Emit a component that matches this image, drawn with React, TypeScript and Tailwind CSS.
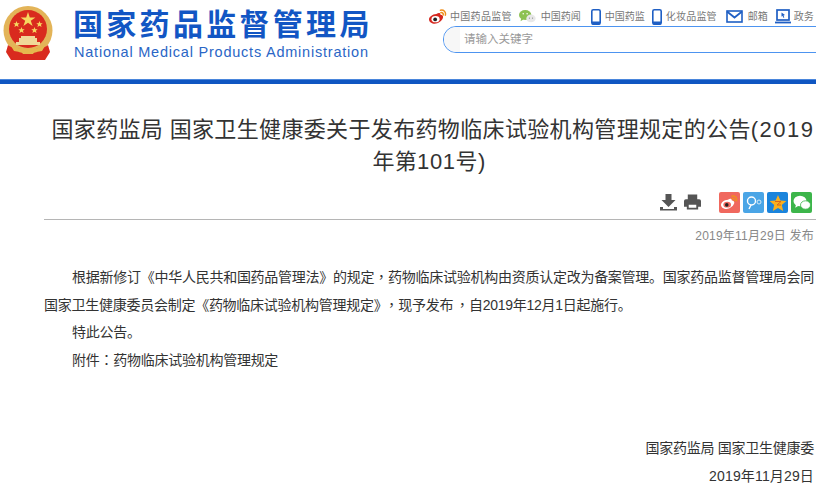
import { FC } from 'react';

const cjk = "font-['Liberation_Sans','Noto_Sans_CJK_SC',sans-serif]";

const Emblem: FC = () => (
    <svg width="50" height="54" viewBox="0 0 50 54" className="shrink-0">
        <circle cx="25" cy="24.500" r="24.500" fill="#e3b458" />
        <circle cx="25" cy="23" r="19" fill="#d92a1e" />
        <path d="M25 6l1.800 5.400h5.600l-4.600 3.300 1.800 5.400-4.600-3.300-4.600 3.300 1.800-5.400-4.600-3.300h5.600z" fill="#f6d860" />
        <path d="M13.500 15l.9 2.200h2.300l-1.800 1.500.7 2.300-2.100-1.300-2.100 1.300.7-2.300-1.800-1.500h2.300z" fill="#f6d860" />
        <path d="M36.500 15l.9 2.200h2.300l-1.800 1.500.7 2.300-2.100-1.300-2.100 1.300.7-2.300-1.800-1.500h2.300z" fill="#f6d860" />
        <path d="M18.500 21l.9 2.200h2.300l-1.800 1.500.7 2.300-2.100-1.300-2.100 1.300.7-2.300-1.800-1.500h2.300z" fill="#f6d860" />
        <path d="M31.500 21l.9 2.200h2.300l-1.800 1.500.7 2.300-2.100-1.300-2.100 1.300.7-2.300-1.800-1.500h2.300z" fill="#f6d860" />
        <path d="M16 36v-4h2v-2h14v2h2v4h3v3H13v-3z" fill="#f0d898" />
        <path d="M5 39c6 6 34 6 40 0l2 7-5 8H8l-5-8z" fill="#d92a1e" />
        <path d="M8 40c8 4 26 4 34 0l-3 5c-4 1-8 1-9 3h-10c-1-2-5-2-9-3z" fill="#e5b84e" />
    </svg>
);

const PhoneIcon: FC = () => (
    <svg width="10" height="16" viewBox="0 0 10 16">
        <rect x=".8" y=".8" width="8.400" height="14.400" rx="1.500" fill="none" stroke="#1f5fc4" strokeWidth="1.600" />
        <rect x="1" y="12.500" width="8" height="3" fill="#1f5fc4" />
    </svg>
);

const WeiboIcon: FC<{ size?: number; color?: string; eye?: string }> = ({
    size = 18,
    color = '#d5271f',
    eye = '#fff',
}) => (
    <svg width={size} height={size * 0.85} viewBox="0 0 22 18.700">
        <path d="M9 6c3-2 5-1.500 5 1 2 0 4 1.500 3 4-1.500 4-6 7-10 7-3.500 0-7-2-7-5.500 0-2.500 4-6.500 9-6.500z" fill={color} />
        <ellipse cx="8" cy="12.500" rx="5" ry="3.800" fill={eye} />
        <circle cx="7.500" cy="12.800" r="2.300" fill="#222" />
        <path d="M14 1.500c4-1 7 2 6 6M14.500 4.500c2-.5 3.200 1 2.900 2.800" stroke="#f0901e" strokeWidth="1.800" fill="none" strokeLinecap="round" />
    </svg>
);

const WechatIcon: FC = () => (
    <svg width="17" height="15" viewBox="0 0 22 18">
        <ellipse cx="8" cy="7" rx="8" ry="6.500" fill="#8cc152" />
        <path d="M3 11l-1 4 4-2.500z" fill="#8cc152" />
        <circle cx="5.500" cy="5.500" r="1" fill="#fff" />
        <circle cx="10.500" cy="5.500" r="1" fill="#fff" />
        <ellipse cx="15.500" cy="11.500" rx="6" ry="5" fill="#e8e8e8" />
        <circle cx="13.500" cy="11" r=".8" fill="#888" />
        <circle cx="17.500" cy="11" r=".8" fill="#888" />
    </svg>
);

const MailIcon: FC = () => (
    <svg width="17" height="13" viewBox="0 0 17 13">
        <rect x="1" y="1" width="15" height="11" fill="none" stroke="#1f5fc4" strokeWidth="1.600" />
        <path d="M1 1.500l7.500 6 7.500-6" fill="none" stroke="#1f5fc4" strokeWidth="1.800" />
    </svg>
);

const ScreenIcon: FC = () => (
    <svg width="16" height="15" viewBox="0 0 16 15">
        <rect x="2" y="1" width="12" height="10" fill="none" stroke="#1f5fc4" strokeWidth="1.700" />
        <path d="M0 13.500h16" stroke="#1f5fc4" strokeWidth="1.800" />
        <path d="M6.500 3.500l3.500 2.500-1.500.5.800 2-1 .3-.8-2-1 .9z" fill="#1f5fc4" />
    </svg>
);

const topLinks = [
    { icon: <WeiboIcon />, label: '中国药品监管', cls: 'ml-[3px] tracking-[.3px]', item: '' },
    { icon: <WechatIcon />, label: '中国药闻', cls: 'ml-[5px]', item: 'ml-[7px]' },
    { icon: <PhoneIcon />, label: '中国药监', cls: 'ml-[4px]', item: 'ml-[10px]' },
    { icon: <PhoneIcon />, label: '化妆品监管', cls: 'ml-[4px] tracking-[.2px]', item: 'ml-[7px]' },
    { icon: <MailIcon />, label: '邮箱', cls: 'ml-[5px]', item: 'ml-[9px]' },
    { icon: <ScreenIcon />, label: '政务', cls: 'ml-[3px]', item: 'ml-[7px]' },
];

const ShareButton: FC<{ bg: string; children: React.ReactNode }> = ({ bg, children }) => (
    <div className={`w-[21px] h-[21px] rounded-[2px] flex items-center justify-center ${bg}`}>
        {children}
    </div>
);

// 逗号、冒号在原图里居中于字格，这里用繁体字形
const Mid: FC<{ className?: string; children: React.ReactNode }> = ({ className = '', children }) => (
    <span className={`font-['Noto_Sans_CJK_TC'] leading-none ${className}`}>{children}</span>
);

export default function App() {
    return (
        <div className={`w-[816px] h-[485px] overflow-hidden bg-white ${cjk}`}>
            <header className="h-[79px] flex pl-[3px] overflow-hidden">
                <div className="pt-[6px]">
                    <Emblem />
                </div>
                <div className="ml-[20px] w-[300px] shrink-0 pt-[7px]">
                    <div className="text-[30px] leading-[36px] font-bold text-[#1256c4] tracking-[3.300px] whitespace-nowrap">
                        国家药品监督管理局
                    </div>
                    <div className="text-[14.500px] leading-[16px] mt-[1px] ml-[1px] text-[#2a66c6] tracking-[.78px] whitespace-nowrap">
                        National Medical Products Administration
                    </div>
                </div>
                <div className="ml-[56px] shrink-0 w-[400px] pt-[8px]">
                    <div className="flex items-center h-[17px] whitespace-nowrap text-[10px] text-[#777]">
                        {topLinks.map((link) => (
                            <div key={link.label} className={`flex items-center ${link.item}`}>
                                {link.icon}
                                <span className={link.cls}>{link.label}</span>
                            </div>
                        ))}
                    </div>
                    <div className="ml-[14px] mt-[1px] w-[400px] h-[27px] border border-[#4d94f0] rounded-l-[13px] flex items-center">
                        <div className="w-[16px] h-full rounded-l-[13px] bg-[#f7f7f7]" />
                        <span className="ml-[4px] text-[11.500px] text-[#999]">请输入关键字</span>
                    </div>
                </div>
            </header>
            <div className="h-[5px] bg-[#0f56c2] border-t border-[#4a86dc]" />
            <main className="ml-[44px] w-[778px]">
                <h1 className="mt-[30px] text-center text-[22px] leading-[32px] tracking-[.35px] text-[#333] font-normal">
                    国家药监局 国家卫生健康委关于发布药物临床试验机构管理规定的公告
                    <span className="tracking-[1.500px]">(2019</span>
                    <br />
                    年第<span className="tracking-[.6px]">101</span><span className="mr-[8px]">号)</span>
                </h1>
                <div className="mt-[6px] h-[36px] pt-[8px] border-b border-[#b5b5b5] flex items-start pl-[616px]">
                    <svg width="17" height="18" viewBox="0 0 17 18" className="mt-[1px]">
                        <path d="M5.500 1h6v6h4l-7 7-7-7h4zM0 14h3v2h11v-2h3v3.500H0z" fill="#555" />
                    </svg>
                    <svg width="17" height="18" viewBox="0 0 18 18" className="mt-[1px] ml-[7px]">
                        <path d="M4 1h10v5H4zM2 6h14a2 2 0 0 1 2 2v6h-3v3H3v-3H0V8a2 2 0 0 1 2-2zm3 6v3h8v-3z" fill="#555" />
                    </svg>
                    <div className="flex gap-[3px] ml-[18px]">
                        <ShareButton bg="bg-[#f0685e]">
                            <WeiboIcon size={17} color="#fff" eye="#f0685e" />
                        </ShareButton>
                        <ShareButton bg="bg-[#4aa5e6]">
                            <svg width="18" height="18" viewBox="0 0 18 18">
                                <circle cx="6.500" cy="7" r="4" fill="none" stroke="#fff" strokeWidth="1.400" />
                                <path d="M4 15l2-4" stroke="#fff" strokeWidth="1.400" />
                                <circle cx="14" cy="8" r="2" fill="none" stroke="#d5eaf8" strokeWidth="1" />
                            </svg>
                        </ShareButton>
                        <ShareButton bg="bg-[#1a84dc]">
                            <svg width="18" height="18" viewBox="0 0 18 18">
                                <path d="M9 1l2.400 5.500 6 .5-4.600 4 1.400 6L9 14l-5.200 3 1.400-6L.6 7l6-.5z" fill="#fbb01c" />
                                <path d="M6 7.500h6l-4 3.500h4" fill="none" stroke="#d9641c" strokeWidth="1" />
                            </svg>
                        </ShareButton>
                        <ShareButton bg="bg-[#3cb54a]">
                            <svg width="18" height="16" viewBox="0 0 18 16">
                                <ellipse cx="7" cy="6" rx="6.500" ry="5.300" fill="#fff" />
                                <path d="M3 9.500l-.8 3.300 3.300-2z" fill="#fff" />
                                <ellipse cx="12.500" cy="10" rx="5" ry="4.200" fill="#fff" stroke="#3cb54a" strokeWidth=".8" />
                            </svg>
                        </ShareButton>
                    </div>
                </div>
                <div className="w-[770px] text-right text-[12px] leading-[16px] mt-[8px] text-[#888] tracking-[.2px]">
                    2019年11月29日 发布
                </div>
                <article className="w-[770px] mt-[20px] text-[14px] leading-[27.500px] text-[#333] tracking-[-.26px]">
                    <p className="indent-[28px]">
                        根据新修订《中华人民共和国药品管理法》的规定<Mid>，</Mid>药物临床试验机构由资质认定改为备案管理。国家药品监督管理局会同国家卫生健康委员会制定《药物临床试验机构管理规定》<Mid className="ml-[4px]">，</Mid>现予发布<Mid className="ml-[2px]">，</Mid>自2019年12月1日起施行。
                    </p>
                    <p className="indent-[28px]">特此公告。</p>
                    <p className="indent-[28px]">附件<Mid>：</Mid>药物临床试验机构管理规定</p>
                    <p className="text-right mt-[61px]">国家药监局 国家卫生健康委</p>
                    <p className="text-right tracking-[.15px]">2019年11月29日</p>
                </article>
            </main>
        </div>
    );
}
